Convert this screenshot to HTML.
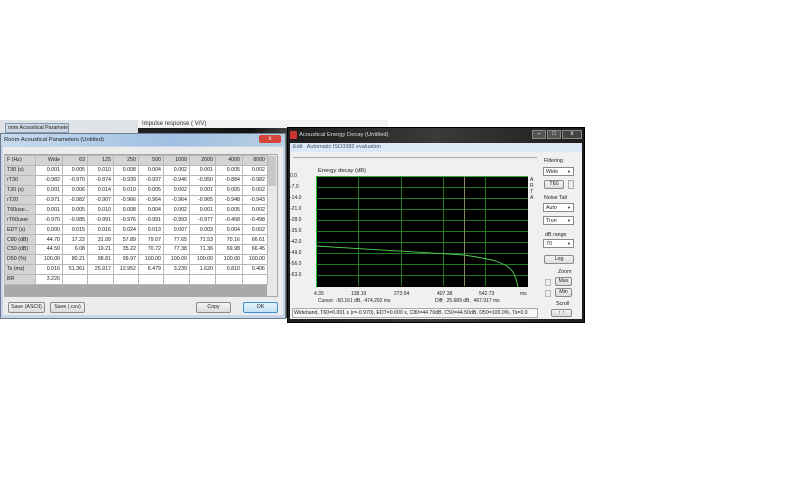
<!DOCTYPE html>
<html><head><meta charset="utf-8"><style>
*{margin:0;padding:0;box-sizing:border-box}
body{width:800px;height:500px;background:#fff;position:relative;overflow:hidden;font-family:"Liberation Sans",sans-serif;font-size:5.5px;color:#222}
.a{position:absolute}
table{border-collapse:collapse;table-layout:fixed}
td{border:1px solid #b8b8b8;height:9.9px;text-align:right;padding-right:2px;background:#fff;white-space:nowrap;overflow:hidden;font-size:5.3px}
td.l{text-align:left;padding-left:2px;background:#d4d4d4}
tr.h td{background:#d4d4d4}
.btn{position:absolute;border:1px solid #8a8a8a;border-radius:2px;background:linear-gradient(#f4f4f4,#dcdcdc);text-align:center;font-size:5.3px;line-height:9px}
.cb{position:absolute;border:1px solid #8a8a8a;background:#fff;font-size:5.3px;line-height:8px;padding-left:2px}
.cb:after{content:"▼";position:absolute;right:2px;top:0;font-size:4px}
.lb{position:absolute;font-size:5.3px;white-space:nowrap}
.yl{position:absolute;left:290px;width:24px;font-size:5px;color:#222}
.hg{position:absolute;left:316px;width:212px;height:1px;background:#1f7a1f}
.vg{position:absolute;top:176px;height:110px;width:1px;background:#1f7a1f}
</style></head><body>
<div class="a" style="left:0;top:120px;width:138px;height:14px;background:#dfe3e8"></div>
<div class="a" style="left:5px;top:123px;width:64px;height:10px;border:1px solid #8a9aae;background:#cdd8e6;font-size:5.3px;line-height:8px;padding-left:2px;white-space:nowrap;overflow:hidden">oom Acoustical Parameters (Untitle</div>
<div class="a" style="left:138px;top:120px;width:250px;height:8px;background:#f2f2f2;font-size:6px;line-height:8px;padding-left:4px;color:#333">Impulse response ( V/V)</div>
<div class="a" style="left:138px;top:128px;width:250px;height:190px;background:linear-gradient(90deg,#222 0,#111 45%,#777 75%,#333 100%)"></div>

<div class="a" style="left:0;top:133px;width:286px;height:186px;background:#c6d6e8;border:1px solid #6d7c8e"></div>
<div class="a" style="left:1px;top:134px;width:284px;height:12px;background:linear-gradient(90deg,#c8dbee,#9ec0e2 60%,#b9cde2);font-size:5.8px;line-height:12px;padding-left:3px">Room Acoustical Parameters (Untitled)</div>
<div class="a" style="left:259px;top:135px;width:22px;height:8px;background:#d6453a;border-radius:2px;color:#fff;font-size:6px;text-align:center;line-height:8px">x</div>
<div class="a" style="left:3px;top:147px;width:280px;height:168px;background:#ececec"></div>
<div class="a" style="left:4px;top:154px;width:274px;height:143px;background:#a9a9a9"></div>
<div class="a" style="left:267px;top:155px;width:10px;height:141px;background:#e8e8e8"></div>
<div class="a" style="left:268px;top:156px;width:8px;height:30px;background:#c8c8c8"></div>
<table class="a" style="left:4px;top:155px;width:263px">
<colgroup><col style="width:31px"><col style="width:27px"><col style="width:25px"><col style="width:26px"><col style="width:25px"><col style="width:25px"><col style="width:26px"><col style="width:26px"><col style="width:27px"><col style="width:25px"></colgroup>
<tr class="h"><td class="l">F (Hz)</td><td>Wide</td><td>63</td><td>125</td><td>250</td><td>500</td><td>1000</td><td>2000</td><td>4000</td><td>8000</td></tr>
<tr><td class="l">T30 (s)</td><td>0.001</td><td>0.005</td><td>0.010</td><td>0.008</td><td>0.004</td><td>0.002</td><td>0.001</td><td>0.005</td><td>0.002</td></tr>
<tr><td class="l">rT30</td><td>-0.982</td><td>-0.970</td><td>-0.874</td><td>-0.939</td><td>-0.937</td><td>-0.946</td><td>-0.950</td><td>-0.884</td><td>-0.982</td></tr>
<tr><td class="l">T20 (s)</td><td>0.001</td><td>0.006</td><td>0.014</td><td>0.010</td><td>0.005</td><td>0.002</td><td>0.001</td><td>0.005</td><td>0.002</td></tr>
<tr><td class="l">rT20</td><td>-0.971</td><td>-0.982</td><td>-0.907</td><td>-0.966</td><td>-0.964</td><td>-0.964</td><td>-0.965</td><td>-0.948</td><td>-0.943</td></tr>
<tr><td class="l">T60use...</td><td>0.001</td><td>0.005</td><td>0.010</td><td>0.008</td><td>0.004</td><td>0.002</td><td>0.001</td><td>0.005</td><td>0.002</td></tr>
<tr><td class="l">rT60user</td><td>-0.970</td><td>-0.985</td><td>-0.991</td><td>-0.976</td><td>-0.991</td><td>-0.993</td><td>-0.977</td><td>-0.458</td><td>-0.498</td></tr>
<tr><td class="l">EDT (s)</td><td>0.000</td><td>0.015</td><td>0.016</td><td>0.024</td><td>0.013</td><td>0.007</td><td>0.003</td><td>0.004</td><td>0.002</td></tr>
<tr><td class="l">C80 (dB)</td><td>44.70</td><td>17.22</td><td>31.09</td><td>57.89</td><td>79.07</td><td>77.65</td><td>71.53</td><td>70.16</td><td>66.61</td></tr>
<tr><td class="l">C50 (dB)</td><td>44.50</td><td>6.08</td><td>19.21</td><td>35.22</td><td>70.72</td><td>77.38</td><td>71.36</td><td>69.98</td><td>66.45</td></tr>
<tr><td class="l">D50 (%)</td><td>100.00</td><td>80.21</td><td>98.81</td><td>99.97</td><td>100.00</td><td>100.00</td><td>100.00</td><td>100.00</td><td>100.00</td></tr>
<tr><td class="l">Ts (ms)</td><td>0.016</td><td>51.361</td><td>25.917</td><td>12.952</td><td>6.479</td><td>3.239</td><td>1.620</td><td>0.810</td><td>0.406</td></tr>
<tr><td class="l">BR</td><td>3.226</td><td></td><td></td><td></td><td></td><td></td><td></td><td></td><td></td></tr>
</table>
<div class="btn" style="left:8px;top:302px;width:37px;height:11px">Save (ASCII)</div>
<div class="btn" style="left:50px;top:302px;width:35px;height:11px">Save (.csv)</div>
<div class="btn" style="left:196px;top:302px;width:35px;height:11px">Copy</div>
<div class="btn" style="left:243px;top:302px;width:35px;height:11px;border-color:#3c8fd0;background:linear-gradient(#e6f3fc,#c4e2f6)">OK</div>

<div class="a" style="left:287px;top:127px;width:298px;height:196px;background:linear-gradient(90deg,#1d1d1d,#3a3a3a 50%,#1d1d1d);border:1px solid #000"></div>
<div class="a" style="left:290px;top:131px;width:7px;height:8px;background:#c33;border-radius:1px"></div>
<div class="a" style="left:299px;top:131px;font-size:5.8px;color:#ddd;line-height:8px">Acoustical Energy Decay (Untitled)</div>
<div class="a" style="left:532px;top:130px;width:14px;height:9px;background:#555;border:1px solid #888;color:#fff;font-size:6px;text-align:center;line-height:7px">–</div>
<div class="a" style="left:547px;top:130px;width:14px;height:9px;background:#555;border:1px solid #888;color:#fff;font-size:6px;text-align:center;line-height:7px">□</div>
<div class="a" style="left:562px;top:130px;width:20px;height:9px;background:#444;border:1px solid #888;color:#fff;font-size:6px;text-align:center;line-height:7px">x</div>
<div class="a" style="left:290px;top:143px;width:292px;height:176px;background:#f0f0f0"></div>
<div class="a" style="left:290px;top:143px;width:292px;height:9px;background:#dce8f6;font-size:5.5px;line-height:9px;padding-left:3px;color:#456">Edit &nbsp; Automatic ISO3382 evaluation</div>
<div class="a" style="left:293px;top:157px;width:244px;height:1px;background:#aaa"></div>
<div class="lb" style="left:318px;top:168px;font-size:5.8px">Energy decay (dB)</div>
<div class="a" style="left:316px;top:176px;width:212px;height:111px;background:#000;border-left:1px solid #3c3"></div>
<div class="hg" style="top:187px"></div><div class="hg" style="top:198px"></div><div class="hg" style="top:209px"></div><div class="hg" style="top:220px"></div><div class="hg" style="top:231px"></div><div class="hg" style="top:242px"></div><div class="hg" style="top:253px"></div><div class="hg" style="top:264px"></div><div class="hg" style="top:275px"></div>
<div class="a" style="left:316px;top:176px;width:212px;height:1px;background:#3a3"></div>
<div class="vg" style="left:358px"></div><div class="vg" style="left:401px"></div><div class="vg" style="left:443px"></div><div class="vg" style="left:485px"></div>
<div class="vg" style="left:464px;background:#8a8a6a"></div>
<svg class="a" style="left:316px;top:176px" width="212" height="111"><path d="M0 70 L148 79 C175 83 190 86 197 96 C200 102 201 106 202 111" stroke="#5c5" stroke-width="0.9" fill="none"/></svg>
<div class="yl" style="top:173px">0.0</div><div class="yl" style="top:184px">-7.0</div><div class="yl" style="top:195px">-14.0</div><div class="yl" style="top:206px">-21.0</div><div class="yl" style="top:217px">-28.0</div><div class="yl" style="top:228px">-35.0</div><div class="yl" style="top:239px">-42.0</div><div class="yl" style="top:250px">-49.0</div><div class="yl" style="top:261px">-56.0</div><div class="yl" style="top:272px">-63.0</div>
<div class="lb" style="left:530px;top:177px;font-size:5px;line-height:6px;width:5px">A<br>R<br>T<br>A</div>
<div class="lb" style="left:314px;top:291px;font-size:5px">4.35</div>
<div class="lb" style="left:351px;top:291px;font-size:5px">138.19</div>
<div class="lb" style="left:394px;top:291px;font-size:5px">273.54</div>
<div class="lb" style="left:437px;top:291px;font-size:5px">407.38</div>
<div class="lb" style="left:479px;top:291px;font-size:5px">542.73</div>
<div class="lb" style="left:520px;top:291px;font-size:5px">ms</div>
<div class="lb" style="left:318px;top:298px;font-size:5px">Cursor: -50.161 dB,&nbsp; 474.292 ms</div>
<div class="lb" style="left:435px;top:298px;font-size:5px">Diff:&nbsp; 25.689 dB,&nbsp; 467.917 ms</div>
<div class="a" style="left:292px;top:308px;width:246px;height:10px;border:1px solid #aaa;background:#f6f6f6;font-size:5.2px;line-height:8px;padding-left:1px;white-space:nowrap;overflow:hidden">Wideband, T60=0.001 s (r=-0.970), EDT=0.000 s, C80=44.70dB, C50=44.50dB, D50=100.0%, Ts=0.0</div>
<div class="lb" style="left:544px;top:158px">Filtering</div>
<div class="cb" style="left:543px;top:167px;width:31px;height:9px">Wide</div>
<div class="btn" style="left:544px;top:180px;width:20px;height:9px;line-height:7px">T60</div>
<div class="a" style="left:568px;top:180px;width:6px;height:9px;border:1px solid #aaa;background:#eee"></div>
<div class="lb" style="left:544px;top:195px">Noise Tail</div>
<div class="cb" style="left:543px;top:203px;width:31px;height:9px">Auto</div>
<div class="cb" style="left:543px;top:216px;width:31px;height:9px">Trun</div>
<div class="lb" style="left:545px;top:232px">dB range</div>
<div class="cb" style="left:543px;top:239px;width:31px;height:9px">70</div>
<div class="btn" style="left:544px;top:255px;width:30px;height:9px;line-height:7px">Log</div>
<div class="lb" style="left:558px;top:269px">Zoom</div>
<div class="a" style="left:545px;top:279px;width:6px;height:7px;border:1px solid #bbb;background:#eee"></div>
<div class="btn" style="left:555px;top:277px;width:17px;height:9px;line-height:7px">Max</div>
<div class="a" style="left:545px;top:290px;width:6px;height:7px;border:1px solid #bbb;background:#eee"></div>
<div class="btn" style="left:555px;top:288px;width:17px;height:9px;line-height:7px">Min</div>
<div class="lb" style="left:556px;top:301px">Scroll</div>
<div class="btn" style="left:551px;top:309px;width:21px;height:8px;line-height:6px">↑ ↑</div>
</body></html>
